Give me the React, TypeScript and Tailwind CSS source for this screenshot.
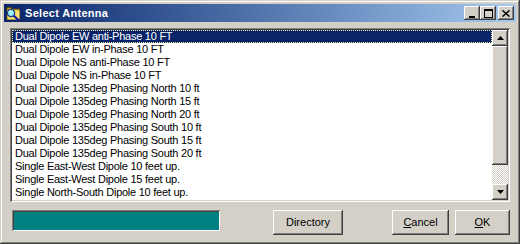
import React from 'react';

const antennas = [
  'Dual Dipole EW anti-Phase 10 FT',
  'Dual Dipole EW in-Phase 10 FT',
  'Dual Dipole NS anti-Phase 10 FT',
  'Dual Dipole NS in-Phase 10 FT',
  'Dual Dipole 135deg Phasing North 10 ft',
  'Dual Dipole 135deg Phasing North 15 ft',
  'Dual Dipole 135deg Phasing North 20 ft',
  'Dual Dipole 135deg Phasing South 10 ft',
  'Dual Dipole 135deg Phasing South 15 ft',
  'Dual Dipole 135deg Phasing South 20 ft',
  'Single East-West Dipole 10 feet up.',
  'Single East-West Dipole 15 feet up.',
  'Single North-South Dipole 10 feet up.',
];

const raised =
  'shadow-[inset_-1px_-1px_#404040,inset_1px_1px_#ffffff,inset_-2px_-2px_#808080,inset_2px_2px_#d4d0c8]';
const sunken =
  'shadow-[inset_1px_1px_#808080,inset_-1px_-1px_#ffffff,inset_2px_2px_#404040,inset_-2px_-2px_#d4d0c8]';

function TitleButton({ children, className = '' }: { children: React.ReactNode; className?: string }) {
  return (
    <div className={`w-[16px] h-[14px] bg-[#d4d0c8] flex items-center justify-center ${raised} ${className}`}>
      {children}
    </div>
  );
}

function Arrow({ down }: { down?: boolean }) {
  return (
    <svg width="7" height="4" viewBox="0 0 7 4" className="block">
      {down ? <path d="M0 0h7L3.5 4z" fill="#000" /> : <path d="M0 4h7L3.5 0z" fill="#000" />}
    </svg>
  );
}

function Button({ label, width, className = '' }: { label: React.ReactNode; width: string; className?: string }) {
  return (
    <button className={`${width} h-[25px] bg-[#d4d0c8] text-[11px] text-black flex items-center justify-center ${raised} ${className}`}>
      {label}
    </button>
  );
}

export default function App() {
  return (
    <div
      className={`w-[520px] h-[244px] bg-[#d4d0c8] p-[4px] flex flex-col font-['Liberation_Sans',Arial,sans-serif] shadow-[inset_-1px_-1px_#404040,inset_1px_1px_#d4d0c8,inset_-2px_-2px_#808080,inset_2px_2px_#ffffff]`}
    >
      {/* title bar */}
      <div className="h-[18px] flex items-center bg-gradient-to-r from-[#0a246a] to-[#a6caf0] pl-[1px] pr-[2px]">
        <svg width="16" height="16" viewBox="0 0 16 16" className="shrink-0">
          {/* folder */}
          <path d="M2 2.5h4l1 1.5h7.5v10.5H2z" fill="#c8a020" stroke="#604800" strokeWidth="0.8" />
          <path d="M2.5 5.5h12v9h-12z" fill="#f8e070" />
          {/* magnifier */}
          <path d="M8.5 10.5l5 4.5" stroke="#1818a0" strokeWidth="2.2" strokeLinecap="round" />
          <circle cx="6" cy="8" r="3.6" fill="#9af0f8" stroke="#1c3c90" strokeWidth="1.3" />
          <path d="M4.4 7a2 2 0 0 1 1.6-1.4" stroke="#ffffff" strokeWidth="0.9" fill="none" />
        </svg>
        <span className="ml-[4px] text-white font-bold text-[11px] tracking-[0.3px] leading-none">Select Antenna</span>
        <div className="flex-1" />
        <TitleButton>
          <svg width="8" height="9" viewBox="0 0 8 9" className="mt-[2px]">
            <rect x="1" y="6" width="6" height="2" fill="#000" />
          </svg>
        </TitleButton>
        <TitleButton>
          <svg width="9" height="9" viewBox="0 0 9 9">
            <rect x="0.5" y="0.5" width="8" height="8" fill="none" stroke="#000" />
            <rect x="0" y="0" width="9" height="2" fill="#000" />
          </svg>
        </TitleButton>
        <TitleButton className="ml-[2px]">
          <svg width="8" height="7" viewBox="0 0 8 7">
            <path d="M0.5 0.5l7 6M7.5 0.5l-7 6" stroke="#000" strokeWidth="1.5" />
          </svg>
        </TitleButton>
      </div>

      {/* list box */}
      <div className={`mt-[6px] mx-[6px] h-[174px] bg-white p-[2px] flex ${sunken}`}>
        <div className="flex-1 text-[11px] tracking-[-0.25px] text-black">
          {antennas.map((a, i) => (
            <div
              key={a}
              className={`h-[13px] leading-[13px] pl-[3px] whitespace-nowrap ${
                i === 0 ? 'bg-[#0a246a] text-white outline outline-1 outline-dotted outline-[#f0f0a0] -outline-offset-1' : ''
              }`}
            >
              {a}
            </div>
          ))}
        </div>
        <div className="w-[16px] flex flex-col bg-[repeating-conic-gradient(#d4d0c8_0%_25%,#ffffff_0%_50%)] bg-[length:2px_2px]">
          <div className={`h-[16px] bg-[#d4d0c8] flex items-center justify-center ${raised}`}>
            <Arrow />
          </div>
          <div className={`h-[119px] bg-[#d4d0c8] ${raised}`} />
          <div className="flex-1" />
          <div className={`h-[16px] bg-[#d4d0c8] flex items-center justify-center ${raised}`}>
            <Arrow down />
          </div>
        </div>
      </div>

      {/* bottom row */}
      <div className="mt-[8px] mx-[6px] h-[25px] flex items-start">
        <div className="ml-[2px] w-[208px] h-[21px] bg-[#008080] shadow-[inset_1px_1px_#808080,inset_-1px_-1px_#ffffff,inset_2px_2px_#404040]" />
        <Button label="Directory" width="w-[70px]" className="ml-[53px]" />
        <Button
          label={
            <span>
              <span className="underline">C</span>ancel
            </span>
          }
          width="w-[57px]"
          className="ml-[49px]"
        />
        <Button
          label={
            <span>
              <span className="underline">O</span>K
            </span>
          }
          width="w-[55px]"
          className="ml-[6px]"
        />
      </div>
    </div>
  );
}
